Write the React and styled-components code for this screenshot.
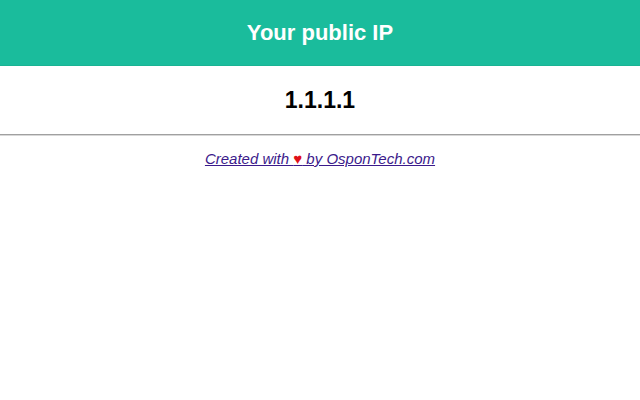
import React from "react";
import styled, { createGlobalStyle } from "styled-components";

const GlobalStyle = createGlobalStyle`
  body {
    margin: 0;
    background: #fff;
    font-family: "Liberation Sans", Arial, sans-serif;
  }
`;

const Header = styled.header`
  height: 66px;
  box-sizing: border-box;
  display: flex;
  align-items: center;
  justify-content: center;
  background-color: #1abc9c;
  border-bottom: 1px solid #19b393;
`;

const Title = styled.h1`
  margin: 0;
  font-size: 22px;
  font-weight: bold;
  color: #fff;
`;

const IpRow = styled.div`
  height: 68px;
  display: flex;
  align-items: center;
  justify-content: center;
`;

const Ip = styled.h2`
  margin: 0;
  font-size: 23px;
  font-weight: bold;
  color: #000;
`;

const Rule = styled.hr`
  margin: 0;
  border: none;
  border-top: 1px solid #a0a0a0;
  border-bottom: 1px solid #d8d8d8;
`;

const Footer = styled.p`
  margin: 14px 0 0;
  text-align: center;
  font-size: 15px;
  font-style: italic;
`;

const Credit = styled.a`
  color: #3b1a8b;
  text-decoration: underline;
`;

const Heart = styled.span`
  color: #e0101a;
`;

const App = () => {
  return (
    <>
      <GlobalStyle />
      <Header>
        <Title>Your public IP</Title>
      </Header>
      <IpRow>
        <Ip>1.1.1.1</Ip>
      </IpRow>
      <Rule />
      <Footer>
        <Credit href="#">
          Created with <Heart>♥</Heart> by OsponTech.com
        </Credit>
      </Footer>
    </>
  );
};

export default App;
